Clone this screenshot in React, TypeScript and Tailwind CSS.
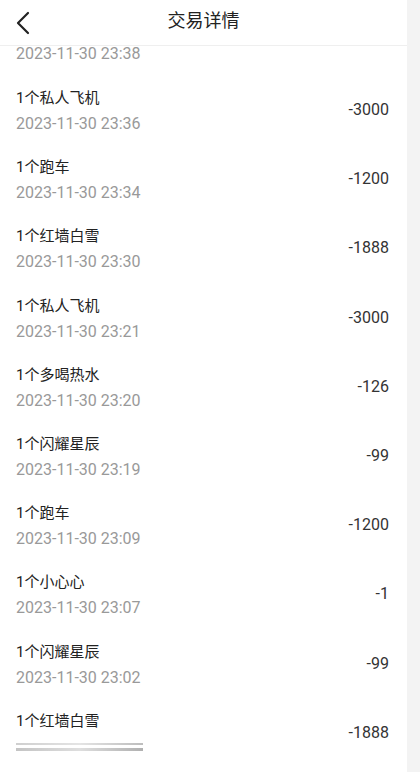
import React from "react";

const rows: [string, string, string][] = [
  ["1个私人飞机", "2023-11-30 23:36", "-3000"],
  ["1个跑车", "2023-11-30 23:34", "-1200"],
  ["1个红墙白雪", "2023-11-30 23:30", "-1888"],
  ["1个私人飞机", "2023-11-30 23:21", "-3000"],
  ["1个多喝热水", "2023-11-30 23:20", "-126"],
  ["1个闪耀星辰", "2023-11-30 23:19", "-99"],
  ["1个跑车", "2023-11-30 23:09", "-1200"],
  ["1个小心心", "2023-11-30 23:07", "-1"],
  ["1个闪耀星辰", "2023-11-30 23:02", "-99"],
];

const font = { fontFamily: 'Roboto, "Noto Sans CJK SC", "Liberation Sans", sans-serif' };

export default function App() {
  return (
    <div className="w-[420px] h-[772px] flex bg-white overflow-hidden" style={font}>
      <div className="w-[407px] flex flex-col">
        <div className="h-[46px] shrink-0 relative flex items-center justify-center border-b border-[#efefef] bg-white z-10">
          <svg className="absolute left-[15px] top-[11px]" width="16" height="24" viewBox="0 0 16 24">
            <polyline points="13,2 3,12 13,22" fill="none" stroke="#222" strokeWidth="2.2" strokeLinecap="round" strokeLinejoin="round" />
          </svg>
          <span className="text-[18px] text-[#222] leading-none mb-[3px]">交易详情</span>
        </div>
        <div className="h-[33px] px-[16px]">
          <div className="pt-[1px] leading-[14px] text-[16px] text-[#999]">2023-11-30 23:38</div>
        </div>
        {rows.map(([t, d, a], i) => (
          <div key={i} className="h-[69.2px] shrink-0 flex items-start pl-[16px] pr-[18px]">
            <div className="flex-1 pt-[9px]">
              <div className="leading-[20px] text-[15px] text-[#222]">{t}</div>
              <div className="mt-[6px] leading-[20px] text-[16px] text-[#999]">{d}</div>
            </div>
            <div className="pt-[21px] leading-[20px] text-[16px] text-[#333]">{a}</div>
          </div>
        ))}
        <div className="h-[69.2px] shrink-0 flex items-start pl-[16px] pr-[18px]">
          <div className="flex-1 pt-[9px]">
            <div className="leading-[20px] text-[15px] text-[#222]">1个红墙白雪</div>
            <div className="mt-[12px] w-[127px] flex flex-col gap-[3px]">
              <div className="h-[2px] w-full bg-gradient-to-r from-[#cfcfcf] via-[#e4e4e4] to-[#bdbdbd] blur-[0.6px]" />
              <div className="h-[3px] w-full bg-gradient-to-r from-[#c4c4c4] via-[#dedede] to-[#b0b0b0] blur-[0.6px]" />
            </div>
          </div>
          <div className="pt-[21px] leading-[20px] text-[16px] text-[#333]">-1888</div>
        </div>
      </div>
      <div className="w-[13px] bg-[#f3f3f3]" />
    </div>
  );
}
